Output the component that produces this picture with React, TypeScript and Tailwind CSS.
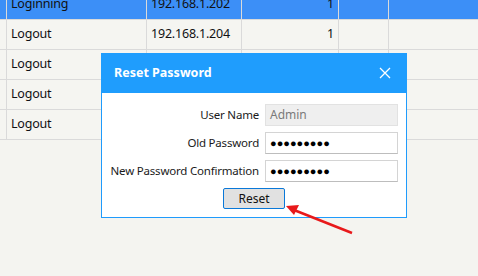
import React from 'react';

const rows = [
    { status: 'Loginning', ip: '192.168.1.202', count: '1', selected: true },
    { status: 'Logout', ip: '192.168.1.204', count: '1' },
    { status: 'Logout', ip: '192.168.1.205', count: '1' },
    { status: 'Logout', ip: '192.168.1.206', count: '1' },
    { status: 'Logout', ip: '192.168.1.207', count: '1' },
];

function Field({ label, value, disabled }: { label: string; value: string; disabled?: boolean }) {
    return (
        <div className="flex items-center h-[22px]">
            <div className="w-[163px] text-right pr-[6px] text-[11.5px] text-[#1a1a1a] whitespace-nowrap tracking-[-0.2px]">{label}</div>
            <div
                className={`w-[133px] h-[22px] flex items-center px-[4px] border ${disabled
                    ? 'bg-[#efefef] border-[#e2e2e2] text-[#7a7a7a] text-[12px]'
                    : 'bg-white border-[#d4d4d4] border-b-[#bdbdbd] text-black text-[11px] tracking-[0px]'
                    }`}
            >
                {value}
            </div>
        </div>
    );
}

export default function App() {
    return (
        <div className="relative w-[478px] h-[276px] overflow-hidden bg-[#f4f4f0] font-['Noto_Sans','Segoe_UI',sans-serif]">

            {/* Table */}
            <div className="-mt-[10px] flex flex-col text-[12.5px] text-[#111] tracking-[-0.2px]">
                {rows.map((r, i) => (
                    <div
                        key={i}
                        className={`flex h-[30px] border-b border-[#dadada] ${r.selected ? 'bg-[#3c8ff7]' : 'bg-[#f5f5f1]'}`}
                    >
                        <div className="w-[6px]" />
                        <div className="w-[140px] border-l border-[#dadada] pl-[4px] flex items-center">{r.status}</div>
                        <div className="w-[95px] border-l border-[#dadada] pl-[4px] flex items-center">{r.ip}</div>
                        <div className="w-[97px] border-l border-[#dadada] pr-[4px] flex items-center justify-end">{r.count}</div>
                        <div className="w-[50px] border-l border-[#dadada]" />
                        <div className="flex-1 border-l border-[#dadada]" />
                    </div>
                ))}
            </div>

            {/* Dialog */}
            <div className="absolute left-[101px] top-[53px] w-[306px] h-[165px] bg-white border border-[#1f9bfc] flex flex-col">
                <div className="h-[40px] -mx-px -mt-px bg-[#1f9dfd] flex items-center justify-between pl-[13px] pr-[16px]">
                    <span className="text-white font-bold text-[12.5px]">Reset Password</span>
                    <svg width="12" height="12" viewBox="0 0 12 12">
                        <path d="M1 1 L11 11 M11 1 L1 11" stroke="white" strokeWidth="1.3" />
                    </svg>
                </div>
                <div className="flex flex-col gap-[6px] pt-[11px]">
                    <Field label="User Name" value="Admin" disabled />
                    <Field label="Old Password" value="●●●●●●●●●" />
                    <Field label="New Password Confirmation" value="●●●●●●●●●" />
                </div>
                <div className="flex justify-center mt-[6px]">
                    <button className="w-[62px] h-[21px] bg-[#e1e1e1] border border-[#0a78d8] rounded-[2px] text-[12px] text-[#111] leading-none">
                        Reset
                    </button>
                </div>
            </div>

            {/* Red arrow */}
            <svg className="absolute left-0 top-0" width="478" height="276">
                <line x1="352" y1="233" x2="294" y2="210" stroke="#e8191b" strokeWidth="2.5" />
                <polygon points="286,206 299,205 294,215" fill="#e8191b" />
            </svg>
        </div>
    );
}
